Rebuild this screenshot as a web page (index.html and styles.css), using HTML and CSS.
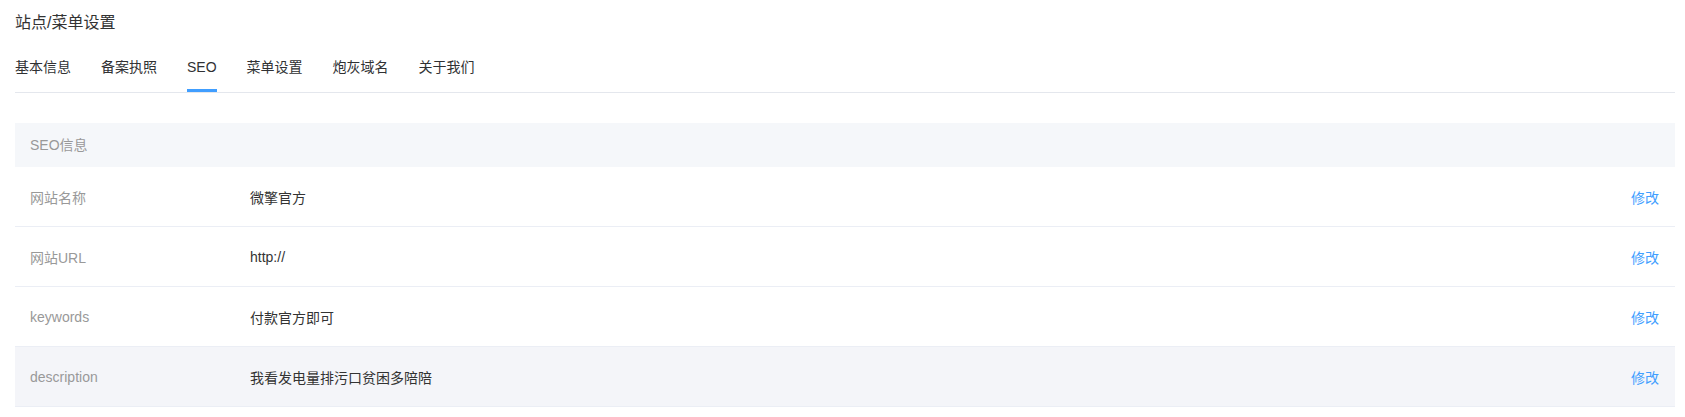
FILE: index.html
```html
<!DOCTYPE html>
<html>
<head>
    <title>站点/菜单设置</title>
    <link rel="stylesheet" href="styles.css">
</head>
<body>
    <div class="page">
        <h2 class="page-title">站点/菜单设置</h2>

        <div class="tabs">
            <a class="tab">基本信息</a>
            <a class="tab">备案执照</a>
            <a class="tab active">SEO</a>
            <a class="tab">菜单设置</a>
            <a class="tab">炮灰域名</a>
            <a class="tab">关于我们</a>
        </div>

        <div class="info-table">
            <div class="info-head">SEO信息</div>
            <div class="info-row">
                <span class="info-label">网站名称</span>
                <span class="info-value">微擎官方</span>
                <a class="info-edit">修改</a>
            </div>
            <div class="info-row">
                <span class="info-label">网站URL</span>
                <span class="info-value">http://</span>
                <a class="info-edit">修改</a>
            </div>
            <div class="info-row">
                <span class="info-label">keywords</span>
                <span class="info-value">付款官方即可</span>
                <a class="info-edit">修改</a>
            </div>
            <div class="info-row hover">
                <span class="info-label">description</span>
                <span class="info-value">我看发电量排污口贫困多陪陪</span>
                <a class="info-edit">修改</a>
            </div>
        </div>
    </div>
</body>
</html>
```

FILE: styles.css
```css
body {
    margin: 0;
    font-family: "Liberation Sans", Arial, "Noto Sans CJK SC", sans-serif;
    color: #333;
    background: #fff;
}

.page {
    padding: 10px 10px 0 15px;
}

.page-title {
    margin: 0;
    font-size: 16px;
    font-weight: normal;
    line-height: 26px;
    color: #333;
}

.tabs {
    display: flex;
    gap: 30px;
    margin-top: 10px;
    border-bottom: 1px solid #e4e7ed;
}

.tab {
    font-size: 14px;
    line-height: 43px;
    border-bottom: 3px solid transparent;
    color: #303133;
}

.tab.active {
    border-bottom-color: #409eff;
}

.info-table {
    margin-top: 30px;
    font-size: 14px;
}

.info-head {
    height: 44px;
    line-height: 44px;
    padding-left: 15px;
    background: #f5f7fa;
    color: #999;
}

.info-row {
    display: flex;
    align-items: center;
    height: 59px;
    border-bottom: 1px solid #ebeef5;
    padding: 0 16px 0 15px;
}

.info-row.hover {
    background: #f4f5f9;
}

.info-label {
    width: 220px;
    color: #999;
}

.info-value {
    flex: 1;
    color: #333;
}

.info-edit {
    color: #409eff;
}
```
